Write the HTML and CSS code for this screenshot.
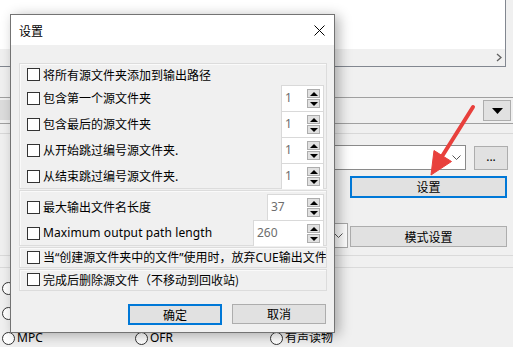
FILE: index.html
```html
<!DOCTYPE html>
<html lang="zh">
<head>
<meta charset="utf-8">
<link rel="stylesheet" href="styles.css">
</head>
<body>
<div class="app">
  <div class="row-top">
    <div class="listbox">
      <div class="lb-body"></div>
      <div class="hscroll"><svg class="chev" width="6" height="9" viewBox="0 0 6 9"><path d="M1 1 L5 4.5 L1 8" fill="none" stroke="#606060" stroke-width="1.3"/></svg></div>
    </div>
  </div>
  <div class="row-bar">
    <div class="bar-left"></div>
    <div class="drop-btn"><svg width="11" height="6" viewBox="0 0 11 6"><path d="M0 0 H11 L5.5 6 Z" fill="#000"/></svg></div>
  </div>
  <div class="row-line"></div>
  <div class="row-combo">
    <div class="combo wide"><svg class="cchev" width="9" height="5" viewBox="0 0 9 5"><path d="M0.5 0.5 L4.5 4.5 L8.5 0.5" fill="none" stroke="#555" stroke-width="1"/></svg></div>
    <div class="btn dots">...</div>
  </div>
  <div class="row-set">
    <div class="btn primary set-btn">设置</div>
  </div>
  <div class="row-mode">
    <div class="combo narrow"><svg class="cchev" width="9" height="5" viewBox="0 0 9 5"><path d="M0.5 0.5 L4.5 4.5 L8.5 0.5" fill="none" stroke="#555" stroke-width="1"/></svg></div>
    <div class="btn mode-btn">模式设置</div>
  </div>
  <div class="row-line2"></div>
  <div class="row-line3"></div>
  <div class="radios">
    <div class="radio-row"><span class="radio"></span><span class="rlabel">APE</span></div>
    <div class="radio-row"><span class="radio"></span><span class="rlabel">WV</span></div>
    <div class="radio-row">
      <div class="rcell c1"><span class="radio"></span><span class="rlabel">MPC</span></div>
      <div class="rcell c2"><span class="radio"></span><span class="rlabel">OFR</span></div>
      <div class="rcell c3"><span class="radio"></span><span class="rlabel">有声读物</span></div>
    </div>
  </div>
</div>

<div class="dialog">
  <div class="dlg-title">
    <span>设置</span>
    <svg class="close" width="11" height="11" viewBox="0 0 11 11"><path d="M0.5 0.5 L10.5 10.5 M10.5 0.5 L0.5 10.5" stroke="#000" stroke-width="1"/></svg>
  </div>
  <div class="dlg-body">
    <div class="group g1">
      <div class="row r-first"><span class="cb"></span><span class="lbl">将所有源文件夹添加到输出路径</span></div>
      <div class="row"><span class="cb"></span><span class="lbl">包含第一个源文件夹</span>
        <div class="spin w43"><span class="val">1</span><div class="sbtns"><span class="sb"><i class="up"></i></span><span class="sb"><i class="dn"></i></span></div></div></div>
      <div class="row"><span class="cb"></span><span class="lbl">包含最后的源文件夹</span>
        <div class="spin w43"><span class="val">1</span><div class="sbtns"><span class="sb"><i class="up"></i></span><span class="sb"><i class="dn"></i></span></div></div></div>
      <div class="row"><span class="cb"></span><span class="lbl">从开始跳过编号源文件夹.</span>
        <div class="spin w43"><span class="val">1</span><div class="sbtns"><span class="sb"><i class="up"></i></span><span class="sb"><i class="dn"></i></span></div></div></div>
      <div class="row"><span class="cb"></span><span class="lbl">从结束跳过编号源文件夹.</span>
        <div class="spin w43"><span class="val">1</span><div class="sbtns"><span class="sb"><i class="up"></i></span><span class="sb"><i class="dn"></i></span></div></div></div>
    </div>
    <div class="group g2">
      <div class="row"><span class="cb"></span><span class="lbl">最大输出文件名长度</span>
        <div class="spin w57"><span class="val">37</span><div class="sbtns"><span class="sb"><i class="up"></i></span><span class="sb"><i class="dn"></i></span></div></div></div>
      <div class="row"><span class="cb"></span><span class="lbl latin">Maximum output path length</span>
        <div class="spin w71"><span class="val">260</span><div class="sbtns"><span class="sb"><i class="up"></i></span><span class="sb"><i class="dn"></i></span></div></div></div>
    </div>
    <div class="group g3">
      <div class="row single"><span class="cb"></span><span class="lbl clip">当“创建源文件夹中的文件”使用时，放弃CUE输出文件</span></div>
    </div>
    <div class="group g4">
      <div class="row single"><span class="cb"></span><span class="lbl">完成后删除源文件（不移动到回收站)</span></div>
    </div>
    <div class="dlg-buttons">
      <div class="btn primary ok">确定</div>
      <div class="btn cancel">取消</div>
    </div>
  </div>
</div>

<svg class="arrow" width="513" height="347" viewBox="0 0 513 347">
  <line x1="473" y1="107" x2="441" y2="158" stroke="#e8403c" stroke-width="4" stroke-linecap="round"/>
  <path d="M431 175 L434 150.5 L451.5 161.5 Z" fill="#e8403c" stroke="#e8403c" stroke-width="1" stroke-linejoin="round"/>
</svg>
</body>
</html>
```

FILE: styles.css
```css
* { box-sizing: border-box; }
html, body { margin: 0; padding: 0; }
body {
  width: 513px;
  height: 347px;
  overflow: hidden;
  background: #f0f0f0;
  font-family: "Noto Sans", "Noto Sans CJK SC", sans-serif;
  font-size: 12px;
  color: #000;
  position: relative;
}
.app {
  width: 513px;
  height: 347px;
  display: flex;
  flex-direction: column;
}
.row-top {
  height: 68px;
  display: flex;
  align-items: flex-start;
}
.listbox {
  margin-right: 7px;
  flex: 1;
  height: 67px;
  background: #fff;
  border: 1px solid #828790;
  border-top: none;
  border-left: none;
  display: flex;
  flex-direction: column;
}
.lb-body { flex: 1; }
.hscroll {
  height: 17px;
  background: #f0f0f0;
  display: flex;
  align-items: center;
  justify-content: flex-end;
  padding-right: 3px;
}
.row-bar {
  margin-top: 29px;
  height: 27px;
  border-top: 1px solid #a0a0a0;
  border-bottom: 1px solid #a0a0a0;
  display: flex;
  align-items: flex-start;
}
.bar-left {
  width: 10px;
  height: 20px;
  margin-top: 2px;
  background: #dcdcdc;
}
.drop-btn {
  margin-left: auto;
  margin-right: 2px;
  margin-top: 2px;
  width: 28px;
  height: 21px;
  background: #e1e1e1;
  border: 1px solid #adadad;
  display: flex;
  align-items: center;
  justify-content: center;
}
.row-line {
  margin-top: 9px;
  border-top: 1px solid #d8d8d8;
  height: 1px;
}
.row-combo {
  margin-top: 11px;
  height: 25px;
  display: flex;
  align-items: flex-start;
}
.combo {
  background: #fff;
  border: 1px solid #8a8a8a;
  display: flex;
  align-items: center;
  justify-content: flex-end;
  padding-right: 4px;
}
.combo.wide {
  margin-left: 150px;
  width: 316px;
  height: 25px;
}
.btn {
  background: #e1e1e1;
  border: 1px solid #adadad;
  display: flex;
  align-items: center;
  justify-content: center;
  font-family: "Noto Sans CJK SC", sans-serif;
  font-size: 12px;
  line-height: 1;
}
.btn.primary {
  border: 2px solid #0078d7;
}
.dots {
  margin-left: 8px;
  margin-top: 1px;
  width: 34px;
  height: 24px;
  font-family: "Noto Sans", sans-serif;
  padding-bottom: 2px;
}
.row-set {
  margin-top: 6px;
  height: 22px;
  display: flex;
}
.set-btn {
  margin-left: 350px;
  width: 157px;
  height: 22px;
}
.row-mode {
  margin-top: 25px;
  height: 25px;
  display: flex;
  align-items: flex-start;
}
.combo.narrow {
  margin-left: 200px;
  width: 148px;
  height: 25px;
  border-color: #a8a8a8;
}
.mode-btn {
  margin-left: 2px;
  margin-top: 3px;
  width: 157px;
  height: 21px;
}
.row-line2 {
  margin-top: 7px;
  border-top: 1px solid #dadada;
  height: 1px;
}
.row-line3 {
  margin-top: 11px;
  border-top: 1px solid #dadada;
  height: 1px;
}
.radios {
  margin-top: 13px;
  display: flex;
  flex-direction: column;
  gap: 11px;
}
.radio-row {
  height: 14px;
  display: flex;
  align-items: center;
  padding-left: 2px;
}
.rcell {
  display: flex;
  align-items: center;
}
.c1 { width: 133px; }
.c2 { width: 135px; }
.radio {
  width: 13px;
  height: 13px;
  border-radius: 50%;
  border: 1px solid #333;
  background: #fff;
  flex: none;
}
.rlabel {
  margin-left: 2px;
  font-family: "Noto Sans", "Noto Sans CJK SC", sans-serif;
  font-size: 12px;
  line-height: 14px;
}

/* dialog */
.dialog {
  position: absolute;
  left: 10px;
  top: 14px;
  width: 325px;
  height: 319px;
  border: 1px solid #737373;
  background: #f0f0f0;
  box-shadow: 4px 2px 12px rgba(0,0,0,0.3);
  display: flex;
  flex-direction: column;
}
.dlg-title {
  height: 30px;
  background: #fff;
  display: flex;
  align-items: center;
  justify-content: space-between;
  padding-left: 8px;
  padding-right: 9px;
  font-family: "Noto Sans CJK SC", sans-serif;
  font-size: 12px;
}
.dlg-body {
  flex: 1;
  padding-top: 18px;
  display: flex;
  flex-direction: column;
}
.group {
  margin: 0 7px 0 8px;
  border: 1px solid #dcdcdc;
  box-shadow: inset 1px 1px 0 #fafafa;
  padding-left: 7px;
  display: flex;
  flex-direction: column;
}
.g1 { height: 126px; }
.g2 { margin-top: 1px; height: 56px; padding-top: 3px; }
.g3 { margin-top: 1px; height: 21px; overflow: hidden; }
.g4 { margin-top: 1px; height: 22px; }
.row {
  height: 26px;
  flex: none;
  display: flex;
  align-items: center;
  position: relative;
}
.r-first { height: 21px; }
.row.single { height: 19px; }
.cb {
  width: 13px;
  height: 13px;
  border: 1px solid #333;
  background: #fff;
  flex: none;
}
.lbl {
  margin-left: 3px;
  font-family: "Noto Sans CJK SC", sans-serif;
  font-size: 12px;
  line-height: 14px;
  white-space: nowrap;
}
.lbl.latin {
  font-family: "Noto Sans", sans-serif;
  letter-spacing: 0.1px;
}
.lbl.clip {
  font-family: "Noto Sans", "Noto Sans CJK SC", sans-serif;
  overflow: visible;
}
.spin {
  margin-left: auto;
  margin-right: 2px;
  height: 26px;
  align-self: flex-start;
  background: #fff;
  border: 1px solid #d9d9d9;
  border-bottom: none;
  display: flex;
  align-items: center;
  justify-content: space-between;
  padding-left: 3px;
  padding-right: 3px;
}
.w43 { width: 43px; }
.w57 { width: 57px; }
.w71 { width: 71px; }
.val {
  color: #6d6d6d;
  font-family: "Noto Sans", sans-serif;
  font-size: 12px;
  margin-top: -2px;
}
.sbtns {
  display: flex;
  flex-direction: column;
  gap: 1px;
}
.sb {
  width: 13px;
  height: 9px;
  background: #e1e1e1;
  border: 1px solid #adadad;
  display: flex;
  align-items: center;
  justify-content: center;
}
.up, .dn {
  width: 0;
  height: 0;
  border-left: 4px solid transparent;
  border-right: 4px solid transparent;
}
.up { border-bottom: 4px solid #000; }
.dn { border-top: 4px solid #000; }
.dlg-buttons {
  margin-top: 13px;
  margin-right: 8px;
  display: flex;
  justify-content: flex-end;
  align-items: flex-start;
  gap: 10px;
}
.ok { width: 94px; height: 21px; }
.cancel { width: 94px; height: 20px; }
.arrow {
  position: absolute;
  left: 0;
  top: 0;
  pointer-events: none;
}
```
